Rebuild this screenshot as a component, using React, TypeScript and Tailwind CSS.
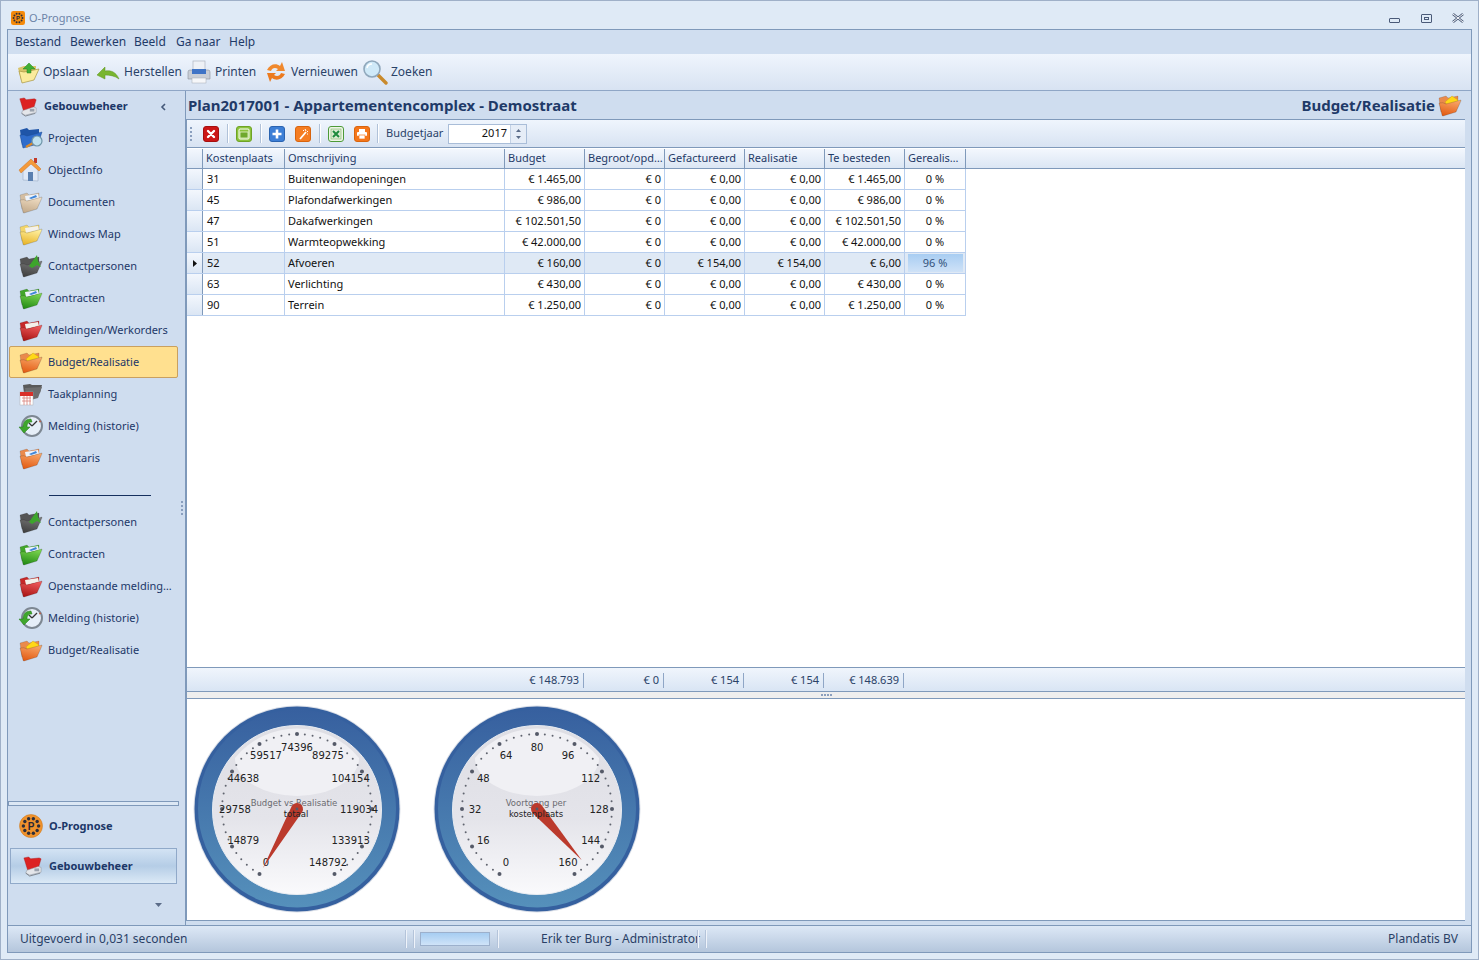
import React, { useId } from "react";

const BORDER = "border-[#7f99ba]";

function Folder({ c1, c2, back, paper, extra }: { c1: string; c2: string; back: string; paper?: React.ReactNode; extra?: React.ReactNode }) {
  const id = useId();
  return (
    <svg width="26" height="26" viewBox="0 0 26 26" className="shrink-0">
      <defs>
        <linearGradient id={id} x1="0.6" y1="0" x2="0.3" y2="1">
          <stop offset="0" stopColor={c1} />
          <stop offset="1" stopColor={c2} />
        </linearGradient>
      </defs>
      <path d="M2 6 L9 4 L11 6 L21 4 L21 12 L4 20 Z" fill={back} stroke="#00000040" strokeWidth="0.5" />
      {paper}
      <path d="M2 11 Q6 10 9 12 L24 8 Q24 9 23 11 L19 20 L6 24 Q5 24 5 23 Z" fill={`url(#${id})`} stroke="#00000050" strokeWidth="0.5" />
      {extra}
    </svg>
  );
}

const whitePaper = <path d="M7 7 L20 5 L21 9 L8 12 Z" fill="#f4f1ea" />;
const bluePaper = (
  <g>
    <path d="M7 7 L20 5 L21 9 L8 12 Z" fill="#eef3fa" />
    <path d="M11 9 L18 6 L19 8 L13 10 Z" fill="#3f86d8" />
  </g>
);
const envelope = <path d="M8 10 L15 4 L21 8 L20 11 L10 13 Z" fill="#ffd817" stroke="#c79a10" strokeWidth="0.4" />;

function ProjectIcon() {
  return (
    <svg width="26" height="26" viewBox="0 0 26 26" className="shrink-0">
      <path d="M2 5 L9 3 L11 5 L21 4 L21 12 L4 20 Z" fill="#1f55a8" />
      <path d="M2 10 Q6 9 9 11 L24 7 L20 19 L5 23 Z" fill="#2f6ccb" stroke="#1a4a92" strokeWidth="0.5" />
      <path d="M8 22 L15 18" stroke="#d98a2c" strokeWidth="2.4" />
      <circle cx="19" cy="16" r="5" fill="#bfe0ef" stroke="#6f95a8" strokeWidth="1.2" />
    </svg>
  );
}
function HouseIcon() {
  return (
    <svg width="26" height="26" viewBox="0 0 26 26" className="shrink-0">
      <rect x="16" y="1" width="3" height="5" fill="#c23a2a" />
      <path d="M5 13 L5 23 L20 24 L20 13 L13 6 Z" fill="#dfe8f6" stroke="#8fa2bd" strokeWidth="0.5" />
      <path d="M1 13 L13 2 L23 12 L21 14 L13 7 L3 16 Z" fill="#f49a3a" stroke="#cf7320" strokeWidth="0.5" />
      <rect x="10" y="15" width="5" height="9" fill="#5a7fb0" />
    </svg>
  );
}
function ClockIcon() {
  return (
    <svg width="26" height="26" viewBox="0 0 26 26" className="shrink-0">
      <circle cx="14" cy="13" r="10" fill="#e6eef8" stroke="#7d8792" strokeWidth="2" />
      <path d="M14 13 L19 8" stroke="#333" strokeWidth="1.3" />
      <path d="M14 13 L11 10" stroke="#333" strokeWidth="1.3" />
      <path d="M13 6 C6 6 5 11 5 14 L1 14 L6 20 L12 14 L9 14 C9 11 10 9 14 9 Z" fill="#3fa62c" stroke="#257a18" strokeWidth="0.5" />
      <path d="M21 9 L23 8" stroke="#d05030" strokeWidth="1" />
    </svg>
  );
}
function CalendarFolder() {
  return (
    <svg width="26" height="26" viewBox="0 0 26 26" className="shrink-0">
      <path d="M5 4 L12 3 L14 4 L24 4 L22 12 L10 16 L6 12 Z" fill="#5a5a5a" />
      <path d="M7 7 L24 6 L20 17 L9 20 Z" fill="#6e6e6e" />
      <rect x="2" y="11" width="13" height="13" fill="#fff" stroke="#b0b0b0" strokeWidth="0.5" />
      <rect x="2" y="11" width="13" height="4" fill="#d9302a" />
      <path d="M4 17 H13 M4 20 H13 M6 15 V24 M9 15 V24 M12 15 V24" stroke="#d88078" strokeWidth="0.8" />
    </svg>
  );
}
const Contact = () => (
  <Folder c1="#777777" c2="#3f3f3f" back="#555555" extra={<path d="M11 13 L19 2 L20 8 L23 14 L19 12 L14 15 Z" fill="#3da52c" />} />
);
const Contract = () => <Folder c1="#7bd44f" c2="#218a14" back="#42a52a" paper={bluePaper} />;
const Docs = () => <Folder c1="#efdcc2" c2="#c2a98a" back="#d4bea2" paper={bluePaper} />;
const Yellow = () => <Folder c1="#fff0a0" c2="#e8b428" back="#f3d569" paper={whitePaper} />;
const Red = () => <Folder c1="#ef5a5a" c2="#a81414" back="#c62828" paper={whitePaper} />;
const Budget = () => <Folder c1="#f8a566" c2="#e25a12" back="#ea8a4c" paper={envelope} />;
const Inv = () => <Folder c1="#f8a566" c2="#e25a12" back="#ea8a4c" paper={bluePaper} />;

function GebouwIcon({ size = 22 }: { size?: number }) {
  return (
    <svg width={size} height={size} viewBox="0 0 22 22" className="shrink-0">
      <path d="M2 2 L7 1 L9 3 L18 2 L20 3 L17 13 L6 15 Z" fill="#dc2222" stroke="#a01616" strokeWidth="0.4" />
      <path d="M5 15 L17 11 L20 12 L20 17 L8 20 L4 18 Z" fill="#e4e6ea" stroke="#8a8f98" strokeWidth="0.5" />
      <path d="M4 18 L8 21 L19 18" stroke="#7f848c" strokeWidth="1" fill="none" />
      <rect x="13" y="13" width="5" height="3" fill="#9aa2ae" />
    </svg>
  );
}
function PrognoseIcon({ size = 24, rounded = false }: { size?: number; rounded?: boolean }) {
  const dots = Array.from({ length: 10 }, (_, i) => {
    const a = (i * Math.PI) / 5;
    return [12 + 7.6 * Math.cos(a), 12 + 7.6 * Math.sin(a)];
  });
  return (
    <svg width={size} height={size} viewBox="0 0 24 24" className="shrink-0">
      {rounded ? <rect width="24" height="24" rx="4" fill="#f58a0a" /> : <circle cx="12" cy="12" r="11.5" fill="#f0922c" stroke="#c8761c" strokeWidth="0.5" />}
      {dots.map(([x, y], i) => (
        <circle key={i} cx={x} cy={y} r="1.7" fill="#2f2f3a" />
      ))}
      <text x="12" y="15.5" textAnchor="middle" fontSize="10" fontWeight="700" fill="#2a2a36" fontFamily="Liberation Sans, sans-serif">P</text>
    </svg>
  );
}

function TbSave() {
  return (
    <svg width="24" height="24" viewBox="0 0 24 24" className="shrink-0">
      <path d="M2 8 L8 6 L20 6 L20 12 L5 20 Z" fill="#d8c46a" />
      <path d="M3 11 L8 12 L23 9 L18 20 L6 23 Z" fill="#fbeb9c" stroke="#a89540" strokeWidth="0.7" />
      <path d="M11 3 H15 V7 H19 L13 13 L7 7 H11 Z" fill="#3fae35" stroke="#26831d" strokeWidth="0.5" transform="rotate(180 13 8)" />
    </svg>
  );
}
function TbUndo() {
  return (
    <svg width="24" height="24" viewBox="0 0 24 24" className="shrink-0">
      <path d="M1 15 L9 7 L9 11 C15 10 20 12 23 19 C19 16 14 15 9 15 L9 19 Z" fill="#78b52e" stroke="#5c9320" strokeWidth="0.5" />
    </svg>
  );
}
function TbPrint() {
  return (
    <svg width="24" height="24" viewBox="0 0 24 24" className="shrink-0">
      <rect x="6" y="1" width="12" height="9" fill="#eef1f6" stroke="#aeb5c0" strokeWidth="0.7" />
      <path d="M3 10 H21 Q23 10 23 12 V19 H1 V12 Q1 10 3 10 Z" fill="#c9ced6" stroke="#8b929c" strokeWidth="0.6" />
      <rect x="5" y="9" width="14" height="5" fill="#3f74c6" />
      <rect x="5" y="18" width="14" height="5" fill="#f6f7f9" stroke="#a4abb5" strokeWidth="0.5" />
    </svg>
  );
}
function TbRefresh() {
  return (
    <svg width="24" height="24" viewBox="0 0 24 24" className="shrink-0">
      <path d="M3 10 C6 4 12 3 16 6 L18 2 L21 11 L12 11 L14 9 C11 7 8 8 7 11 Z" fill="#f0892e" />
      <path d="M21 14 C18 20 12 21 8 18 L6 22 L3 13 L12 13 L10 15 C13 17 16 16 17 13 Z" fill="#ec7a1e" />
    </svg>
  );
}
function TbSearch() {
  return (
    <svg width="26" height="26" viewBox="0 0 26 26" className="shrink-0">
      <path d="M15 15 L24 24" stroke="#c98a2c" strokeWidth="3.4" strokeLinecap="round" />
      <circle cx="10" cy="10" r="8" fill="#cfe9f8" stroke="#8fa7bb" strokeWidth="1.6" />
      <path d="M5 9 A5 5 0 0 1 10 5" stroke="#fff" strokeWidth="1.5" fill="none" />
    </svg>
  );
}

function Sq({ bg, border, children }: { bg: string; border: string; children: React.ReactNode }) {
  return (
    <svg width="16" height="16" viewBox="0 0 16 16" className="shrink-0">
      <rect x="0.5" y="0.5" width="15" height="15" rx="2.5" fill={bg} stroke={border} />
      {children}
    </svg>
  );
}

const Sep = () => <div className="w-px h-[19px] bg-[#b0c1d8] border-r border-white box-content" />;

type Item = { label: string; icon: React.ReactNode; active?: boolean };

const topItems: Item[] = [
  { label: "Projecten", icon: <ProjectIcon /> },
  { label: "ObjectInfo", icon: <HouseIcon /> },
  { label: "Documenten", icon: <Docs /> },
  { label: "Windows Map", icon: <Yellow /> },
  { label: "Contactpersonen", icon: <Contact /> },
  { label: "Contracten", icon: <Contract /> },
  { label: "Meldingen/Werkorders", icon: <Red /> },
  { label: "Budget/Realisatie", icon: <Budget />, active: true },
  { label: "Taakplanning", icon: <CalendarFolder /> },
  { label: "Melding (historie)", icon: <ClockIcon /> },
  { label: "Inventaris", icon: <Inv /> },
];
const bottomItems: Item[] = [
  { label: "Contactpersonen", icon: <Contact /> },
  { label: "Contracten", icon: <Contract /> },
  { label: "Openstaande melding…", icon: <Red /> },
  { label: "Melding (historie)", icon: <ClockIcon /> },
  { label: "Budget/Realisatie", icon: <Budget /> },
];

function NavItem({ item }: { item: Item }) {
  return (
    <div
      className={
        item.active
          ? "h-[32px] ml-[1px] w-[169px] flex items-center gap-[4px] pl-[8px] rounded-[2px] border border-[#c9a060] bg-[#ffe08f] text-[11px] text-[#1c3768]"
          : "h-[32px] ml-[1px] w-[169px] flex items-center gap-[4px] pl-[8px] border border-transparent text-[11px] text-[#1c3768]"
      }
    >
      {item.icon}
      <span className="whitespace-nowrap">{item.label}</span>
    </div>
  );
}

type Row = { k: string; o: string; b: string; g: string; r: string; t: string; p: string; sel?: boolean };
const rows: Row[] = [
  { k: "31", o: "Buitenwandopeningen", b: "€ 1.465,00", g: "€ 0,00", r: "€ 0,00", t: "€ 1.465,00", p: "0 %" },
  { k: "45", o: "Plafondafwerkingen", b: "€ 986,00", g: "€ 0,00", r: "€ 0,00", t: "€ 986,00", p: "0 %" },
  { k: "47", o: "Dakafwerkingen", b: "€ 102.501,50", g: "€ 0,00", r: "€ 0,00", t: "€ 102.501,50", p: "0 %" },
  { k: "51", o: "Warmteopwekking", b: "€ 42.000,00", g: "€ 0,00", r: "€ 0,00", t: "€ 42.000,00", p: "0 %" },
  { k: "52", o: "Afvoeren", b: "€ 160,00", g: "€ 154,00", r: "€ 154,00", t: "€ 6,00", p: "96 %", sel: true },
  { k: "63", o: "Verlichting", b: "€ 430,00", g: "€ 0,00", r: "€ 0,00", t: "€ 430,00", p: "0 %" },
  { k: "90", o: "Terrein", b: "€ 1.250,00", g: "€ 0,00", r: "€ 0,00", t: "€ 1.250,00", p: "0 %" },
];

const COLS = "grid grid-cols-[16px_82px_220px_80px_80px_80px_80px_80px_61px] w-[779px]";
const HEAD = "flex items-center pl-[3px] border-r border-[#7f99ba] overflow-hidden whitespace-nowrap";
const CELL = "flex items-center border-r border-[#b9cfee] whitespace-nowrap";
const CELLR = "flex items-center justify-end pr-[3px] border-r border-[#b9cfee] whitespace-nowrap";

function Gauge({ labels, title, needle, title2, titleShift }: { labels: string[]; title: string; title2: string; needle: number; titleShift: number }) {
  const id = useId();
  const cx = 105;
  const cy = 105;
  const pt = (deg: number, r: number) => {
    const a = (deg * Math.PI) / 180;
    return [cx + r * Math.sin(a), cy - r * Math.cos(a)] as const;
  };
  const ticks: React.ReactNode[] = [];
  for (let i = 0; i <= 50; i++) {
    const [x, y] = pt(210 + i * 6, 75);
    const major = i % 5 === 0;
    ticks.push(<circle key={i} cx={x} cy={y} r={major ? 2 : 1} fill={major ? "#555a68" : "#60646f"} />);
  }
  const [tx, ty] = pt(needle, 68);
  const [lx, ly] = pt(needle + 90, 6);
  const [rx, ry] = pt(needle - 90, 6);
  return (
    <svg width="210" height="210" viewBox="0 0 210 210" className="shrink-0">
      <defs>
        <linearGradient id={`${id}r`} x1="0" y1="0" x2="0" y2="1">
          <stop offset="0" stopColor="#37609f" />
          <stop offset="1" stopColor="#5590bb" />
        </linearGradient>
        <linearGradient id={`${id}d`} x1="0" y1="0" x2="0" y2="1">
          <stop offset="0" stopColor="#dedee4" />
          <stop offset="0.55" stopColor="#e4e4ea" />
          <stop offset="1" stopColor="#fafafc" />
        </linearGradient>
      </defs>
      <circle cx={cx} cy={cy} r="103.5" fill="#d8dde6" />
      <circle cx={cx} cy={cy} r="102.5" fill="#35609f" />
      <circle cx={cx} cy={cy - 0.5} r="99" fill={`url(#${id}r)`} />
      <circle cx={cx} cy={cy + 1} r="84.5" fill={`url(#${id}d)`} stroke="#e8ecf2" strokeWidth="1" />
      <path d="M43 54 A80 80 0 0 1 167 54 A62 38 0 0 1 43 54 Z" fill="#f0f0f4" />
      {ticks}
      {labels.map((l, i) => {
        const [x, y] = pt(210 + i * 30, 62);
        return (
          <text key={i} x={x} y={y + 3.5} textAnchor="middle" fontSize="10" fontFamily="DejaVu Sans, sans-serif" fill="#222">
            {l}
          </text>
        );
      })}
      <text x={cx + titleShift} y={cy - 3} textAnchor="middle" fontSize="8.5" fontFamily="DejaVu Sans, sans-serif" fill="#6a6a70">{title}</text>
      <path d={`M${tx} ${ty} L${lx} ${ly} A6 6 0 1 1 ${rx} ${ry} Z`} fill="#bb3a2c" />
      <circle cx={cx} cy={cy} r="1.4" fill="#555a68" />
      <text x={cx - 1} y={cy + 8} textAnchor="middle" fontSize="8.5" fontFamily="DejaVu Sans, sans-serif" fill="#222">{title2}</text>
    </svg>
  );
}

function StatusDiv() {
  return <div className="flex gap-[6px] h-[18px]"><div className="w-[2px] bg-[#eef3fa] border-l border-[#b4c4da]" /><div className="w-[2px] bg-[#eef3fa] border-l border-[#b4c4da]" /></div>;
}

export default function App() {
  return (
    <div className="w-[1479px] h-[960px] flex flex-col bg-[#dfeaf6] border border-[#9fb0c8] font-['DejaVu_Sans_Condensed','Noto_Sans',sans-serif] overflow-hidden">
      {/* title bar */}
      <div className="h-[28px] shrink-0 flex items-center pl-[10px] pr-[14px] pt-[6px]">
        <PrognoseIcon size={14} rounded />
        <span className="ml-[4px] text-[11px] text-[#6d84a8]">O-Prognose</span>
        <div className="ml-auto flex items-center gap-[21px]">
          <div className="w-[11px] h-[5px] mt-[4px] rounded-[1px] border border-[#4a5a78]" />
          <div className="w-[11px] h-[9px] rounded-[1px] border border-[#4a5a78] flex items-center justify-center"><div className="w-[5px] h-[3px] border border-[#4a5a78]" /></div>
          <svg className="-ml-[1px]" width="12" height="10" viewBox="0 0 12 10"><path d="M1 1 L11 9 M11 1 L1 9" stroke="#4a5a78" strokeWidth="2.4" /><path d="M1 1 L11 9 M11 1 L1 9" stroke="#ffffff" strokeWidth="1" /></svg>
        </div>
      </div>
      {/* frame */}
      <div className={`w-[1465px] ml-[6px] h-[924px] flex flex-col border ${BORDER} bg-[#cfddef]`}>
        <div className="h-[24px] shrink-0 flex items-center pl-[7px] text-[12px] text-[#1f3a68] bg-[#d0def0]">
          <span className="w-[55px]">Bestand</span>
          <span className="w-[64px]">Bewerken</span>
          <span className="w-[42px]">Beeld</span>
          <span className="w-[53px]">Ga naar</span>
          <span>Help</span>
        </div>
        <div className="h-[37px] shrink-0 flex items-center pl-[8px] text-[12px] text-[#2a4268] bg-gradient-to-b from-[#eff5fd] to-[#d8e3f2] border-b border-[#8fa6c6]">
          <div className="w-[80px] flex items-center gap-[3px]"><TbSave /><span>Opslaan</span></div>
          <div className="w-[91px] flex items-center gap-[4px]"><TbUndo /><span>Herstellen</span></div>
          <div className="w-[77px] flex items-center gap-[4px]"><TbPrint /><span>Printen</span></div>
          <div className="w-[98px] flex items-center gap-[3px]"><TbRefresh /><span>Vernieuwen</span></div>
          <div className="flex items-center gap-[3px]"><TbSearch /><span>Zoeken</span></div>
        </div>
        {/* main */}
        <div className="flex-1 flex min-h-0">
          {/* sidebar */}
          <aside className={`w-[178px] shrink-0 relative flex flex-col border-r ${BORDER}`}>
            <div className="h-[31px] shrink-0 flex items-center pl-[10px] pr-[18px]">
              <GebouwIcon size={20} />
              <span className="text-[11px] font-bold text-[#1c3768] ml-[6px]">Gebouwbeheer</span>
              <svg className="ml-auto" width="7" height="8" viewBox="0 0 7 8"><path d="M5 1 L2 4 L5 7" stroke="#45597a" strokeWidth="1.6" fill="none" /></svg>
            </div>
            {topItems.map((it, i) => <NavItem key={i} item={it} />)}
            <div className="h-[32px] shrink-0 flex items-end pb-[10px] pl-[41px]"><div className="w-[102px] h-px bg-[#16305e]" /></div>
            {bottomItems.map((it, i) => <NavItem key={i} item={it} />)}
            <div className="absolute left-[173px] top-[410px] flex flex-col gap-[2px]">
              <div className="w-[2px] h-[2px] bg-[#8a9fbe]" /><div className="w-[2px] h-[2px] bg-[#8a9fbe]" /><div className="w-[2px] h-[2px] bg-[#8a9fbe]" /><div className="w-[2px] h-[2px] bg-[#8a9fbe]" />
            </div>
            <div className="flex-1" />
            <div className={`h-[5px] w-[171px] shrink-0 border ${BORDER} bg-[#dce7f4]`} />
            <div className="h-[42px] shrink-0 flex items-center pl-[11px] pb-[2px] gap-[6px]">
              <PrognoseIcon size={24} />
              <span className="text-[11px] font-bold text-[#1c3768]">O-Prognose</span>
            </div>
            <div className="h-[36px] w-[167px] ml-[2px] shrink-0 flex items-center pl-[11px] gap-[6px] border border-[#90a9c9] bg-gradient-to-b from-[#d3e3f4] via-[#b5cde6] to-[#dbe9f6]">
              <GebouwIcon size={21} />
              <span className="text-[11px] font-bold text-[#1c3768]">Gebouwbeheer</span>
            </div>
            <div className="h-[41px] shrink-0 flex items-center pl-[147px]">
              <svg width="7" height="4" viewBox="0 0 7 4"><path d="M0 0 H7 L3.5 4 Z" fill="#5b6c88" /></svg>
            </div>
          </aside>
          {/* content */}
          <div className="flex-1 min-w-0 flex flex-col pr-[6px] pb-[4px]">
            <div className="h-[28px] shrink-0 flex items-center pl-[2px] pr-[2px]">
              <span className="text-[15px] font-bold text-[#1f3a68] whitespace-nowrap">Plan2017001 - Appartementencomplex - Demostraat</span>
              <span className="ml-auto text-[15px] font-bold text-[#1f3a68] whitespace-nowrap">Budget/Realisatie</span>
              <div className="ml-[2px]"><Budget /></div>
            </div>
            <div className={`flex-1 min-h-0 flex flex-col border-l ${BORDER}`}>
              {/* grid toolbar */}
              <div className={`h-[29px] shrink-0 flex items-center border-t border-b ${BORDER} bg-gradient-to-b from-[#eff5fd] to-[#d8e3f2] pl-[3px] text-[11px] text-[#2a4268]`}>
                <div className="flex flex-col gap-[2px] mr-[11px]">
                  <div className="w-[2px] h-[2px] bg-[#8a9fbe]" /><div className="w-[2px] h-[2px] bg-[#8a9fbe]" /><div className="w-[2px] h-[2px] bg-[#8a9fbe]" /><div className="w-[2px] h-[2px] bg-[#8a9fbe]" />
                </div>
                <Sq bg="#cc1616" border="#a50f0f"><path d="M5 5 L11 11 M11 5 L5 11" stroke="#fff" strokeWidth="2.4" strokeLinecap="round" /></Sq>
                <div className="ml-[8px] mr-[7px]"><Sep /></div>
                <Sq bg="#8cc33c" border="#6fa326"><rect x="3" y="3" width="10" height="10" rx="1" fill="none" stroke="#fff" strokeWidth="1" /><rect x="4" y="6" width="8" height="6" fill="#6fa92c" stroke="#e8f5d0" strokeWidth="0.8" /></Sq>
                <div className="ml-[8px] mr-[7px]"><Sep /></div>
                <Sq bg="#3d7fd6" border="#2a63b0"><path d="M8 3.5 V12.5 M3.5 8 H12.5" stroke="#fff" strokeWidth="2.6" /></Sq>
                <div className="w-[10px]" />
                <Sq bg="#f57d22" border="#d8640e"><path d="M5 13 L11 6" stroke="#fff" strokeWidth="1.8" /><path d="M10 3 L11 5 M13 5 L12 6 M8 4 L9 5 M13 8 L12 8" stroke="#fff" strokeWidth="1" /></Sq>
                <div className="ml-[8px] mr-[7px]"><Sep /></div>
                <Sq bg="#eef6e6" border="#4d9a38"><rect x="3" y="3" width="10" height="10" fill="#dcecd2" stroke="#7fb56a" strokeWidth="0.6" /><path d="M5 5 L11 11 M11 5 L5 11" stroke="#1e8a3c" strokeWidth="2" /></Sq>
                <div className="w-[10px]" />
                <Sq bg="#f5761a" border="#d8640e"><rect x="5" y="3" width="6" height="3" fill="#fff" /><rect x="3" y="6" width="10" height="4" rx="1" fill="#fff" /><rect x="5" y="9" width="6" height="4" fill="#fff" stroke="#f5761a" strokeWidth="0.7" /></Sq>
                <div className="mx-[7px]"><Sep /></div>
                <span className="w-[62px] whitespace-nowrap">Budgetjaar</span>
                <div className="w-[79px] h-[20px] flex border border-[#a9bdd8] bg-white">
                  <div className="flex-1 flex items-center justify-end pr-[3px] text-[#111]">2017</div>
                  <div className="w-[16px] flex flex-col items-center justify-center gap-[4px] border-l border-[#c3d1e4] bg-[#e6edf7]">
                    <svg width="5" height="3" viewBox="0 0 5 3"><path d="M0 3 L2.5 0 L5 3 Z" fill="#5b6c88" /></svg>
                    <svg width="5" height="3" viewBox="0 0 5 3"><path d="M0 0 L5 0 L2.5 3 Z" fill="#5b6c88" /></svg>
                  </div>
                </div>
              </div>
              {/* header */}
              <div className={`h-[21px] shrink-0 flex border-b border-t border-t-white ${BORDER} bg-gradient-to-b from-[#f3f7fd] to-[#dbe6f4] text-[11px] text-[#1f3a68]`}>
                <div className={`${COLS} shrink-0`}>
                  <div className={HEAD} />
                  <div className={HEAD}>Kostenplaats</div>
                  <div className={HEAD}>Omschrijving</div>
                  <div className={HEAD}>Budget</div>
                  <div className={HEAD}>Begroot/opd…</div>
                  <div className={HEAD}>Gefactureerd</div>
                  <div className={HEAD}>Realisatie</div>
                  <div className={HEAD}>Te besteden</div>
                  <div className={HEAD}>Gerealis…</div>
                </div>
              </div>
              {/* rows */}
              <div className="flex-1 min-h-0 bg-white text-[11px] text-[#111]">
                {rows.map((r) => (
                  <div key={r.k} className={r.sel ? `${COLS} h-[21px] border-b border-[#b9cfee] bg-[#dfe9f5]` : `${COLS} h-[21px] border-b border-[#b9cfee]`}>
                    <div className="flex items-center justify-center border-r border-[#7f99ba] bg-gradient-to-b from-[#f3f7fd] to-[#dbe6f4]">
                      {r.sel && <svg width="4" height="7" viewBox="0 0 4 7"><path d="M0 0 L4 3.5 L0 7 Z" fill="#111" /></svg>}
                    </div>
                    <div className={`${CELL} pl-[4px]`}>{r.k}</div>
                    <div className={`${CELL} pl-[3px]`}>{r.o}</div>
                    <div className={CELLR}>{r.b}</div>
                    <div className={CELLR}>€ 0</div>
                    <div className={CELLR}>{r.g}</div>
                    <div className={CELLR}>{r.r}</div>
                    <div className={CELLR}>{r.t}</div>
                    <div className="flex items-center justify-center border-r border-[#b9cfee] relative">
                      {r.sel ? (
                        <div className="w-[55px] h-[18px] flex items-center justify-center bg-gradient-to-b from-[#a8cdf2] to-[#cfe2f7] text-[#33527a]">{r.p}</div>
                      ) : (
                        r.p
                      )}
                    </div>
                  </div>
                ))}
              </div>
              {/* footer */}
              <div className={`h-[25px] shrink-0 flex items-center pt-[1px] border-t border-b ${BORDER} bg-gradient-to-b from-[#f0f5fc] to-[#d9e5f4] text-[11px] text-[#2a4268]`}>
                <div className="w-[317px] shrink-0" />
                <div className="w-[80px] shrink-0 h-[15px] flex items-center justify-end pr-[4px] border-r border-[#8fa6c6]">€ 148.793</div>
                <div className="w-[80px] shrink-0 h-[15px] flex items-center justify-end pr-[4px] border-r border-[#8fa6c6]">€ 0</div>
                <div className="w-[80px] shrink-0 h-[15px] flex items-center justify-end pr-[4px] border-r border-[#8fa6c6]">€ 154</div>
                <div className="w-[80px] shrink-0 h-[15px] flex items-center justify-end pr-[4px] border-r border-[#8fa6c6]">€ 154</div>
                <div className="w-[80px] shrink-0 h-[15px] flex items-center justify-end pr-[4px] border-r border-[#8fa6c6]">€ 148.639</div>
              </div>
              {/* splitter */}
              <div className="h-[6px] shrink-0 flex items-center justify-center bg-[#eeeeee]">
                <div className="flex gap-[1px]">
                  <div className="w-[2px] h-[2px] bg-[#8a9fbe]" /><div className="w-[2px] h-[2px] bg-[#8a9fbe]" /><div className="w-[2px] h-[2px] bg-[#8a9fbe]" /><div className="w-[2px] h-[2px] bg-[#8a9fbe]" />
                </div>
              </div>
              {/* gauges */}
              <div className={`h-[223px] shrink-0 flex gap-[30px] pl-[5px] pt-[5px] bg-white border-t border-b ${BORDER}`}>
                <Gauge labels={["0", "14879", "29758", "44638", "59517", "74396", "89275", "104154", "119034", "133913", "148792"]} title="Budget vs Realisatie" title2="totaal" needle={210} titleShift={-3} />
                <Gauge labels={["0", "16", "32", "48", "64", "80", "96", "112", "128", "144", "160"]} title="Voortgang per" title2="kostenplaats" needle={138.75} titleShift={-1} />
              </div>
            </div>
          </div>
        </div>
        {/* status bar */}
        <div className={`h-[27px] shrink-0 flex items-center border-t ${BORDER} bg-gradient-to-b from-[#dde8f6] to-[#b4c6dc] text-[12px] text-[#2a3f66]`}>
          <span className="ml-[12px] w-[385px] whitespace-nowrap">Uitgevoerd in 0,031 seconden</span>
          <StatusDiv />
          <div className="ml-[5px] w-[70px] h-[14px] border border-[#9cb0cc] bg-gradient-to-b from-[#a6cdf2] to-[#cfe3f8]" />
          <div className="ml-[7px]"><div className="w-[2px] h-[18px] bg-[#eef3fa] border-l border-[#b4c4da]" /></div>
          <span className="ml-[42px] w-[156px] whitespace-nowrap">Erik ter Burg - Administrator</span>
          <StatusDiv />
          <span className="ml-auto mr-[13px]">Plandatis BV</span>
        </div>
      </div>
    </div>
  );
}
